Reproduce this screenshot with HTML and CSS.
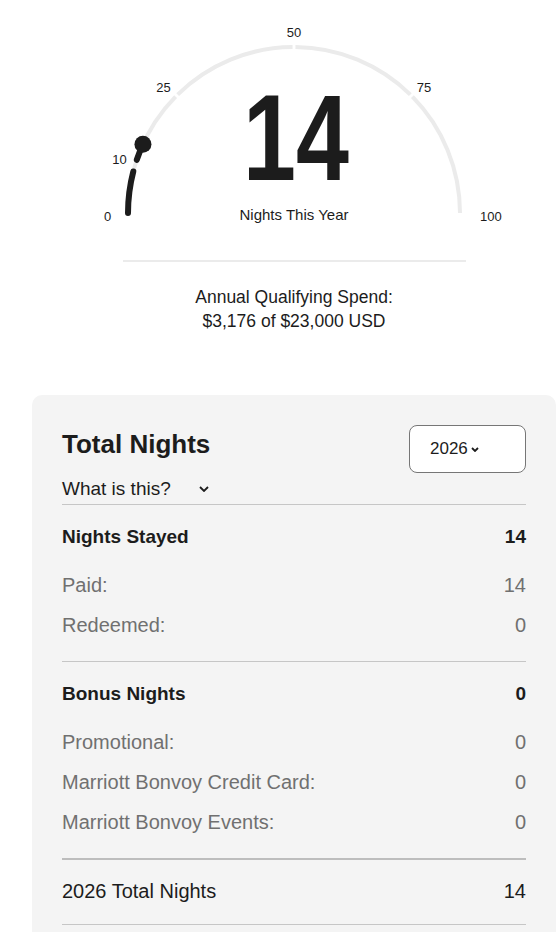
FILE: index.html
```html
<!DOCTYPE html>
<html lang="en">
<head>
  <meta charset="UTF-8" />
  <title>Nights This Year</title>
  <link rel="stylesheet" href="styles.css">
</head>
<body>

<div class="page">

  <!-- Gauge -->
  <svg class="gauge" width="420" height="232" viewBox="0 0 420 232">
    <!-- grey track, split at 25 / 50 / 75 -->
    <g class="track">
      <path d="M44 213 A166 166 0 0 1 91.6 96.65" />
      <path d="M93.65 94.6 A166 166 0 0 1 208.55 47.01" />
      <path d="M211.45 47.01 A166 166 0 0 1 326.35 94.6" />
      <path d="M328.4 96.65 A166 166 0 0 1 376 213" />
    </g>
    <!-- progress: 14 of 100 -->
    <g class="progress">
      <path d="M44 213 A166 166 0 0 1 49.3 171.44" />
      <path d="M52.8 159.8 A166 166 0 0 1 58.94 144.16" />
      <circle cx="58.94" cy="144.16" r="8.5" />
    </g>
    <g class="ticks">
      <text x="23.5" y="220.7">0</text>
      <text x="35.5" y="164">10</text>
      <text x="79.5" y="91.7">25</text>
      <text x="210" y="37">50</text>
      <text x="340" y="91.7">75</text>
      <text x="406.8" y="220.7">100</text>
    </g>
    <text class="count" transform="translate(212 180) scale(0.78 1)">14</text>
    <text class="count-label" x="210" y="220">Nights This Year</text>
  </svg>

  <div class="gauge-rule"></div>

  <p class="spend">Annual Qualifying Spend:<br>$3,176 of $23,000 USD</p>

  <!-- Total Nights card -->
  <div class="card">
    <div class="card-head">
      <div>
        <h2 class="card-title">Total Nights</h2>
        <div class="explain">
          What is this?
          <svg width="10" height="6" viewBox="0 0 10 6"><path d="M1 1 L5 5 L9 1" /></svg>
        </div>
      </div>
      <div class="year-select">
        2026
        <svg width="8" height="5" viewBox="0 0 8 5"><path d="M1 1 L4 4 L7 1" /></svg>
      </div>
    </div>

    <div class="tally-group">
      <div class="tally-head"><span>Nights Stayed</span><span>14</span></div>
      <div class="tally-row"><span>Paid:</span><span>14</span></div>
      <div class="tally-row"><span>Redeemed:</span><span>0</span></div>
    </div>

    <div class="tally-group">
      <div class="tally-head"><span>Bonus Nights</span><span>0</span></div>
      <div class="tally-row"><span>Promotional:</span><span>0</span></div>
      <div class="tally-row"><span>Marriott Bonvoy Credit Card:</span><span>0</span></div>
      <div class="tally-row"><span>Marriott Bonvoy Events:</span><span>0</span></div>
    </div>

    <div class="tally-total"><span>2026 Total Nights</span><span>14</span></div>
  </div>

</div>

</body>
</html>
```

FILE: styles.css
```css
body {
  margin: 0;
  background: #fff;
  color: #1c1c1c;
  font-family: "Liberation Sans", Arial, sans-serif;
  overflow: hidden;
}

.page {
  width: 524px;
  padding-left: 32px;
}

/* Gauge */
.gauge {
  display: block;
  margin: 0 auto;
}

.track path {
  fill: none;
  stroke: #ebebeb;
  stroke-width: 4;
}

.progress path {
  fill: none;
  stroke: #1c1c1c;
  stroke-width: 6;
  stroke-linecap: round;
}

.progress circle {
  fill: #1c1c1c;
}

.ticks text {
  font-size: 13px;
  fill: #1c1c1c;
  text-anchor: middle;
}

.count {
  font-size: 122px;
  font-weight: bold;
  fill: #1c1c1c;
  text-anchor: middle;
}

.count-label {
  font-size: 15px;
  fill: #1c1c1c;
  text-anchor: middle;
}

.gauge-rule {
  width: 343px;
  height: 2px;
  margin: 28px auto 0;
  background: #ebebeb;
}

.spend {
  margin: 23px 0 0;
  font-size: 17.5px;
  line-height: 24px;
  text-align: center;
}

/* Card */
.card {
  margin-top: 62px;
  padding: 30px 30px 40px 30px;
  background: #f4f4f4;
  border-radius: 10px;
}

.card-head {
  display: flex;
  justify-content: space-between;
  align-items: flex-start;
  padding-bottom: 3px;
}

.card-title {
  margin: 3px 0 0;
  font-size: 26px;
  line-height: 32px;
  font-weight: bold;
}

.explain {
  display: flex;
  align-items: center;
  gap: 28px;
  margin-top: 17px;
  font-size: 19px;
  line-height: 24px;
  cursor: pointer;
}

.explain svg path,
.year-select svg path {
  fill: none;
  stroke: #1c1c1c;
  stroke-width: 1.8;
}

.year-select {
  display: flex;
  align-items: center;
  gap: 3px;
  box-sizing: border-box;
  width: 117px;
  height: 48px;
  padding-left: 20px;
  background: #fff;
  border: 1px solid #767676;
  border-radius: 8px;
  font-size: 17px;
  cursor: pointer;
}

.tally-group {
  border-top: 1px solid #c6c6c6;
  padding: 20px 0 16px;
}

.tally-head,
.tally-row,
.tally-total {
  display: flex;
  justify-content: space-between;
}

.tally-head {
  margin-bottom: 16px;
  font-size: 19px;
  line-height: 24px;
  font-weight: bold;
}

.tally-row {
  font-size: 20px;
  line-height: 40px;
  color: #707070;
}

.tally-total {
  padding: 19px 0 21px;
  border-top: 2px solid #bdbdbd;
  border-bottom: 1px solid #c6c6c6;
  font-size: 20px;
  line-height: 24px;
}
```
